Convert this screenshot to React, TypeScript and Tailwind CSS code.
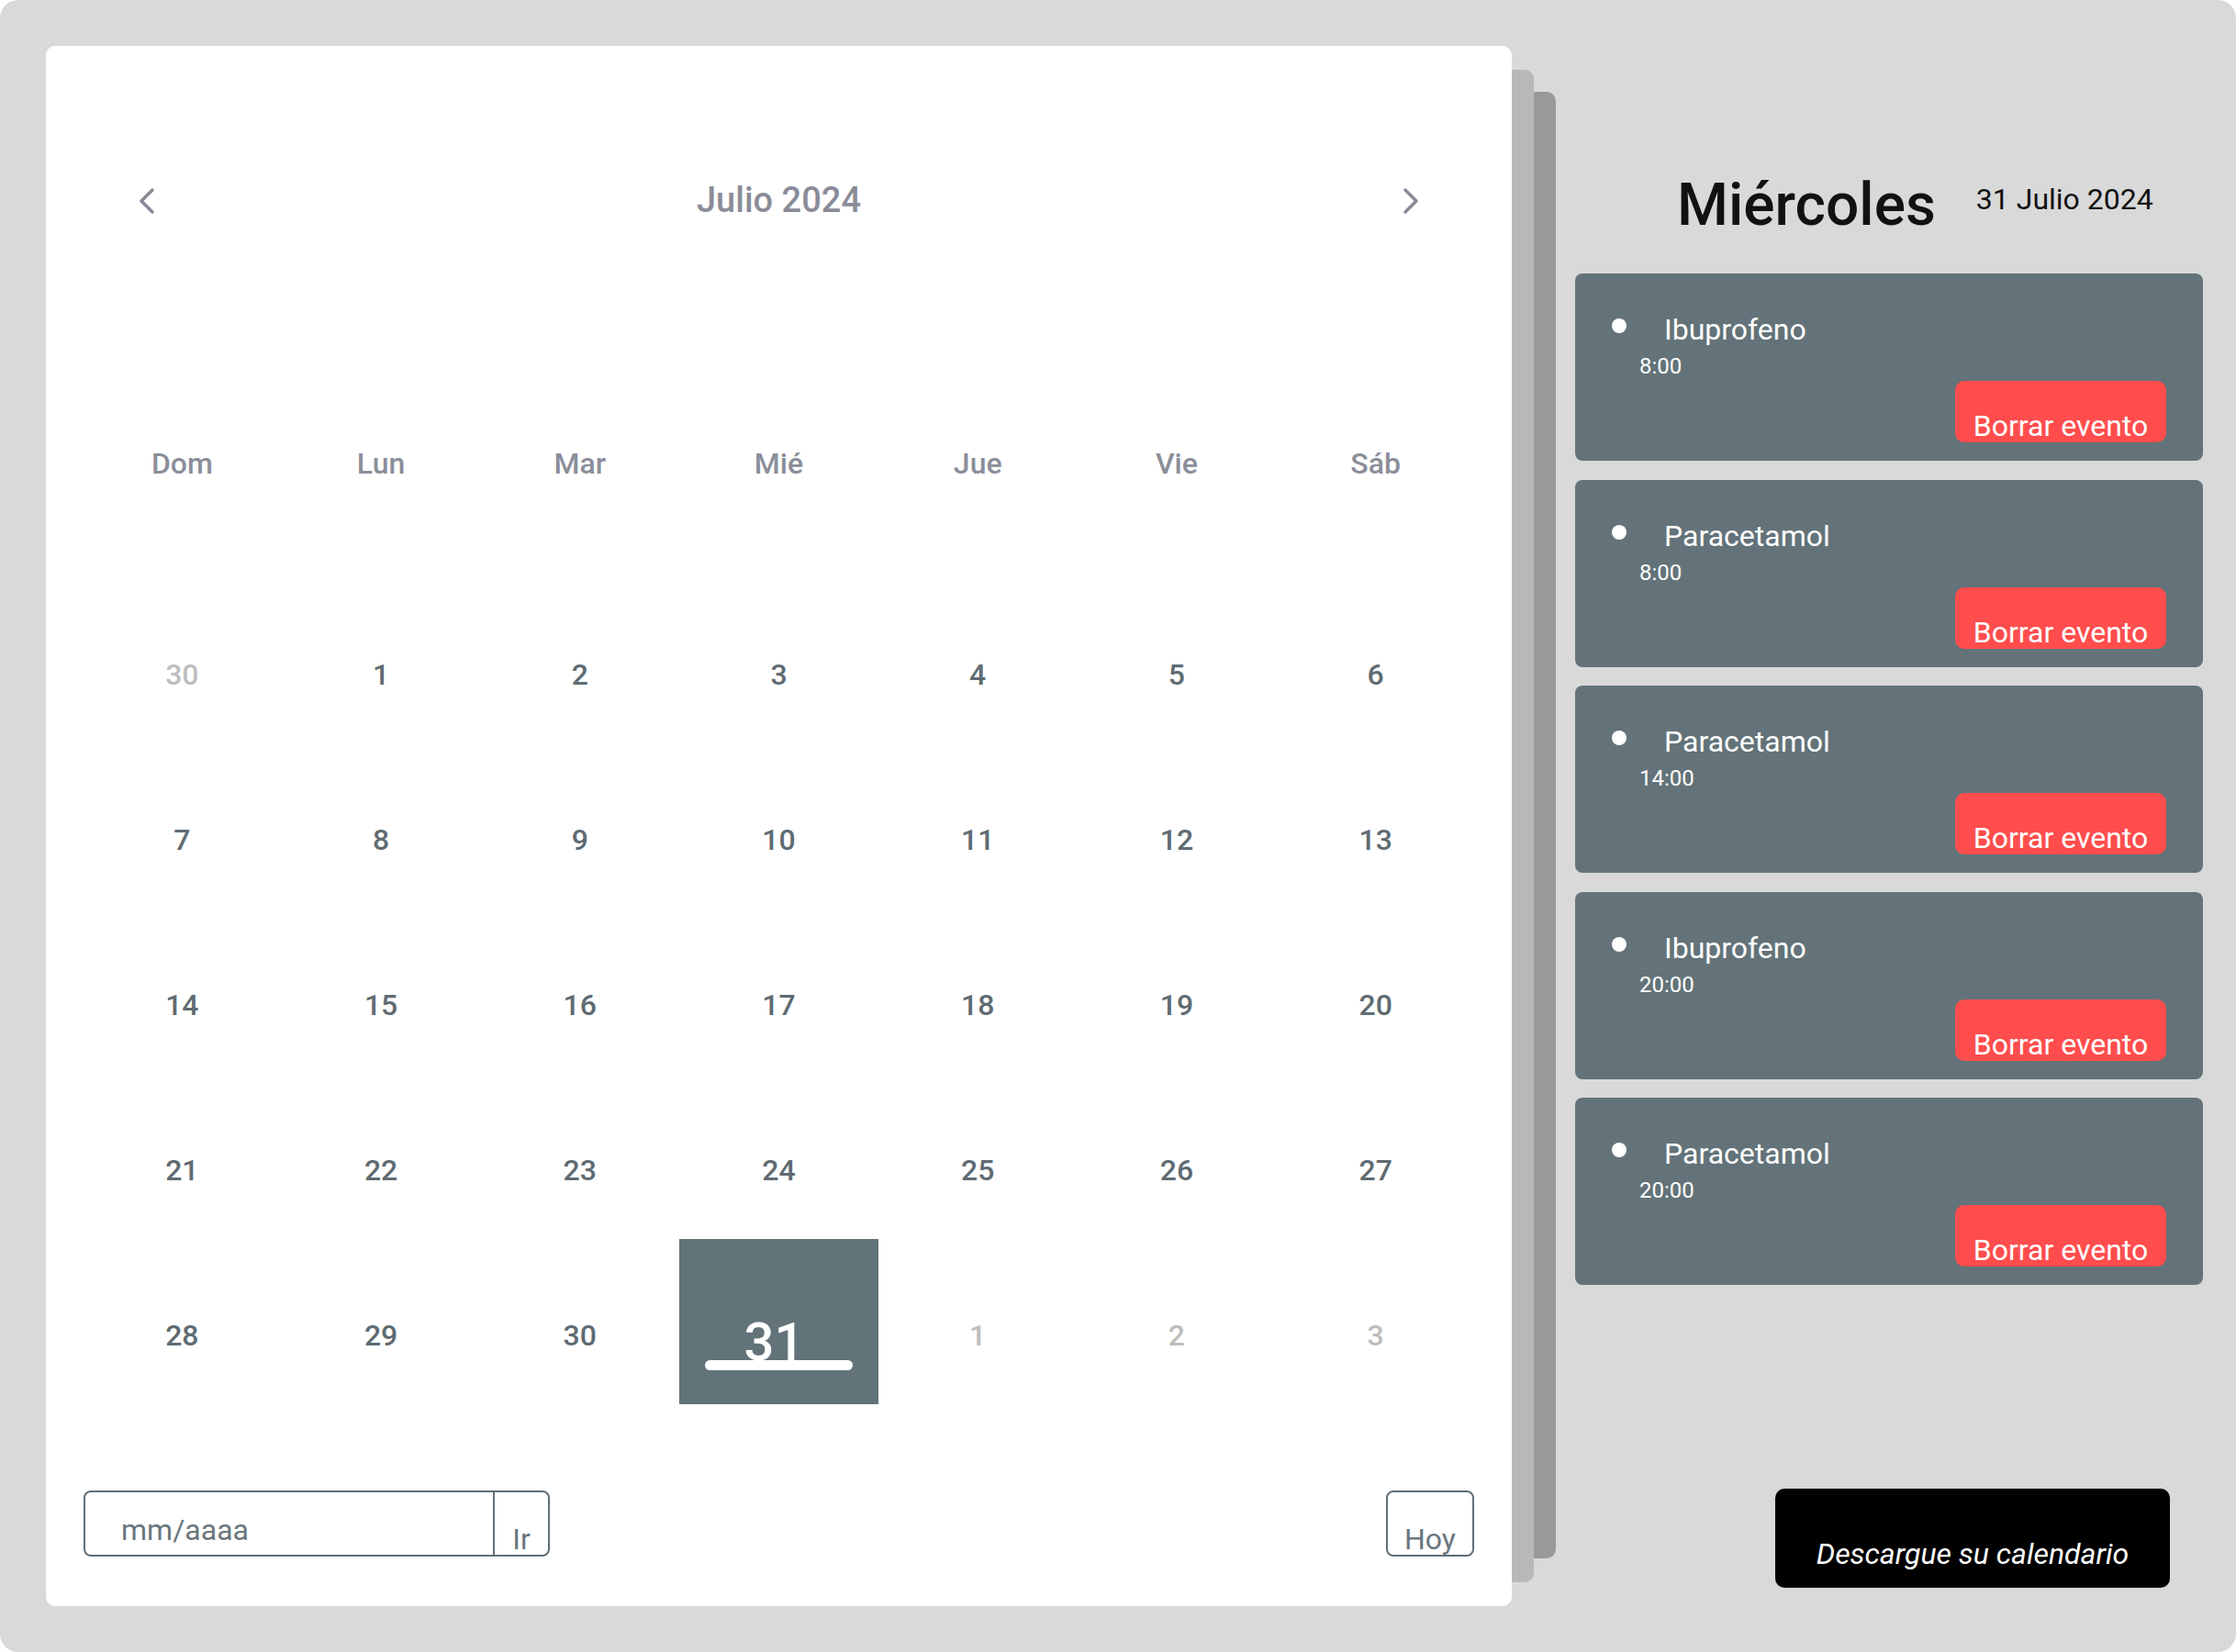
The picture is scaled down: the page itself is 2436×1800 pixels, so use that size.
import { useState } from "react"

type Day = { n: number; muted?: boolean }

const weekDays = ["Dom", "Lun", "Mar", "Mié", "Jue", "Vie", "Sáb"]

const weeks: Day[][] = [
  [{ n: 30, muted: true }, { n: 1 }, { n: 2 }, { n: 3 }, { n: 4 }, { n: 5 }, { n: 6 }],
  [{ n: 7 }, { n: 8 }, { n: 9 }, { n: 10 }, { n: 11 }, { n: 12 }, { n: 13 }],
  [{ n: 14 }, { n: 15 }, { n: 16 }, { n: 17 }, { n: 18 }, { n: 19 }, { n: 20 }],
  [{ n: 21 }, { n: 22 }, { n: 23 }, { n: 24 }, { n: 25 }, { n: 26 }, { n: 27 }],
  [{ n: 28 }, { n: 29 }, { n: 30 }, { n: 31 }, { n: 1, muted: true }, { n: 2, muted: true }, { n: 3, muted: true }],
]

const events = [
  { name: "Ibuprofeno", time: "8:00" },
  { name: "Paracetamol", time: "8:00" },
  { name: "Paracetamol", time: "14:00" },
  { name: "Ibuprofeno", time: "20:00" },
  { name: "Paracetamol", time: "20:00" },
]

function Chevron({ dir }: { dir: "left" | "right" }) {
  return (
    <svg width="20" height="32" viewBox="0 0 20 32" fill="none">
      <polyline
        points={dir === "left" ? "16,5 4,17 16,29" : "4,5 16,17 4,29"}
        stroke="#878a96"
        strokeWidth="3.5"
        strokeLinecap="round"
        strokeLinejoin="round"
      />
    </svg>
  )
}

function Calendar() {
  const [month] = useState("Julio 2024")
  return (
    <div className="w-[1597px] h-[1700px] bg-white rounded-[10px] px-[40px] pt-[149px] flex flex-col">
      {/* Header */}
      <div className="flex items-center justify-between px-[60px] h-[38px]">
        <Chevron dir="left" />
        <h2 className="text-[38px] leading-none font-medium text-[#8a8c98]">{month}</h2>
        <Chevron dir="right" />
      </div>

      {/* Weekdays */}
      <div className="grid grid-cols-7 mt-[252px]">
        {weekDays.map((d) => (
          <div key={d} className="text-center text-[32px] leading-none font-medium text-[#8b8e9a]">
            {d}
          </div>
        ))}
      </div>

      {/* Days */}
      <div className="grid grid-cols-7 mt-[109px]">
        {weeks.flat().map((d, i) =>
          !d.muted && d.n === 31 ? (
            <div key={i} className="h-[180px] bg-[#63737a] flex flex-col items-center pt-[83px]">
              <span className="text-[58px] leading-none font-medium text-white pr-[10px]">31</span>
              <span className="w-[161px] h-[11px] rounded-full bg-white -mt-[9px]" />
            </div>
          ) : (
            <div
              key={i}
              className={`h-[180px] pt-[89px] text-center text-[32px] leading-none font-medium ${
                d.muted ? "text-[#bdbdbd]" : "text-[#5f6b72]"
              }`}
            >
              {d.n}
            </div>
          )
        )}
      </div>

      {/* Footer controls */}
      <div className="flex items-start justify-between mt-[94px] pl-[1px] pr-[1px]">
        <div className="w-[508px] h-[72px] border-2 border-[#5f6f77] rounded-[8px] flex overflow-hidden">
          <input
            placeholder="mm/aaaa"
            className="flex-1 min-w-0 pl-[39px] pt-[14px] text-[32px] leading-none text-[#6a767d] placeholder:text-[#6a767d] outline-none bg-transparent"
          />
          <button className="w-[60px] border-l-2 border-[#5f6f77] flex items-end justify-center pb-[1px] text-[32px] leading-none text-[#6a767d]">
            Ir
          </button>
        </div>
        <button className="w-[96px] h-[72px] border-2 border-[#5f6f77] rounded-[8px] flex items-end justify-center pb-[1px] text-[32px] leading-none text-[#6a767d]">
          Hoy
        </button>
      </div>
    </div>
  )
}

function EventCard({ name, time }: { name: string; time: string }) {
  return (
    <div className="w-[684px] h-[204px] bg-[#637379] rounded-[8px] px-[40px] pt-[45px] flex flex-col">
      <div className="flex items-start">
        <span className="w-[16px] h-[16px] rounded-full bg-white mt-[4px] shrink-0" />
        <span className="ml-[41px] text-[32px] leading-none text-white">{name}</span>
      </div>
      <span className="ml-[30px] mt-[12px] text-[24px] leading-none text-white">{time}</span>
      <button className="self-end mt-[4px] w-[230px] h-[67px] bg-[#ff4d4d] rounded-[10px] flex items-end justify-center pb-[2px] text-[32px] leading-none text-white">
        Borrar evento
      </button>
    </div>
  )
}

export default function App() {
  return (
    <div className="w-[2436px] h-[1800px] bg-white" style={{ fontFamily: "Roboto, 'Noto Sans', sans-serif" }}>
      <div className="w-full h-full bg-[#d9d9d9] rounded-[20px] flex">
        {/* Calendar with stacked pages */}
        <div className="flex items-start mt-[50px] ml-[50px]">
          <Calendar />
          <div className="w-[24px] h-[1648px] mt-[26px] bg-[#b8b8b8] rounded-r-[10px]" />
          <div className="w-[24px] h-[1598px] mt-[50px] bg-[#999999] rounded-r-[10px]" />
        </div>

        {/* Day panel */}
        <div className="pl-[21px] pt-[192px] flex flex-col">
          <div className="flex items-start ml-[111px]">
            <h1 className="text-[64px] leading-none font-medium text-[#111111]">Miércoles</h1>
            <span className="ml-[44px] mt-[9px] text-[32px] leading-none text-[#111111]">31 Julio 2024</span>
          </div>

          <div className="flex flex-col gap-[20.5px] mt-[42px]">
            {events.map((e, i) => (
              <EventCard key={i} name={e.name} time={e.time} />
            ))}
          </div>

          <button className="ml-[218px] mt-[222px] w-[430px] h-[108px] bg-black rounded-[10px] flex items-end justify-center pb-[21px] text-[32px] leading-none italic text-white">
            Descargue su calendario
          </button>
        </div>
      </div>
    </div>
  )
}
